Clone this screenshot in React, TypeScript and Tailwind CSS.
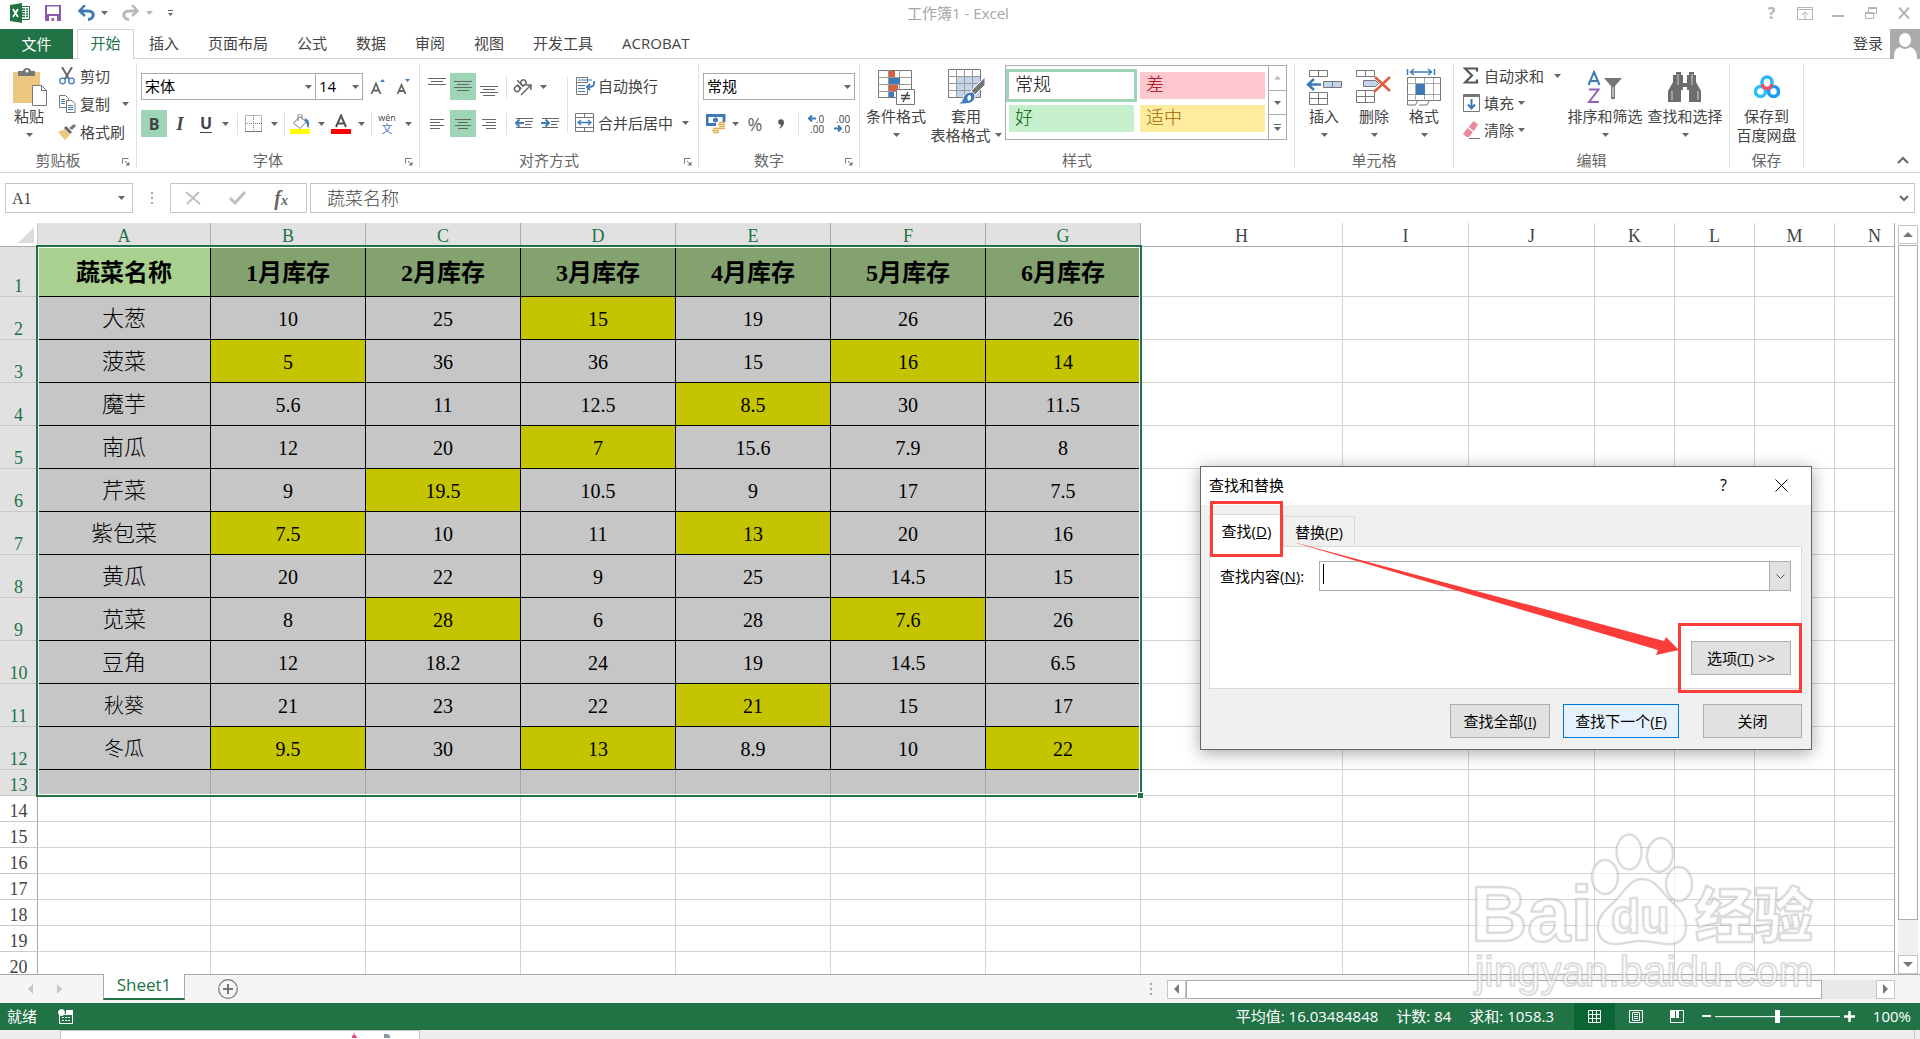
import type { ReactNode } from "react";

const COLUMNS = [
  { name: "A", width: 173 },
  { name: "B", width: 155 },
  { name: "C", width: 155 },
  { name: "D", width: 155 },
  { name: "E", width: 155 },
  { name: "F", width: 155 },
  { name: "G", width: 155 },
  { name: "H", width: 202 },
  { name: "I", width: 126 },
  { name: "J", width: 126 },
  { name: "K", width: 80 },
  { name: "L", width: 80 },
  { name: "M", width: 80 },
  { name: "N", width: 80 },
];
const ROW_HEADER_WIDTH = 38;
const TABLE_WIDTH = COLUMNS.reduce((sum, c) => sum + c.width, ROW_HEADER_WIDTH);

const HEADINGS = ["蔬菜名称", "1月库存", "2月库存", "3月库存", "4月库存", "5月库存", "6月库存"];

// a trailing * marks a highlighted cell
const STOCK = [
  ["大葱", "10", "25", "15*", "19", "26", "26"],
  ["菠菜", "5*", "36", "36", "15", "16*", "14*"],
  ["魔芋", "5.6", "11", "12.5", "8.5*", "30", "11.5"],
  ["南瓜", "12", "20", "7*", "15.6", "7.9", "8"],
  ["芹菜", "9", "19.5*", "10.5", "9", "17", "7.5"],
  ["紫包菜", "7.5*", "10", "11", "13*", "20", "16"],
  ["黄瓜", "20", "22", "9", "25", "14.5", "15"],
  ["苋菜", "8", "28*", "6", "28", "7.6*", "26"],
  ["豆角", "12", "18.2", "24", "19", "14.5", "6.5"],
  ["秋葵", "21", "23", "22", "21*", "15", "17"],
  ["冬瓜", "9.5*", "30", "13*", "8.9", "10", "22*"],
];
const EMPTY_ROWS = [14, 15, 16, 17, 18, 19, 20];

const SERIF = "font-['Liberation_Serif','Noto_Sans_CJK_SC',serif]";

function Caret({ light = false }: { light?: boolean }) {
  return (
    <svg width="7" height="4" viewBox="0 0 7 4" className={light ? "text-[#b8b8b8]" : "text-[#666]"}>
      <path d="M0 0h7L3.5 4z" fill="currentColor" />
    </svg>
  );
}

function Tool({ label, w, on = false, children }: { label: string; w: string; on?: boolean; children: ReactNode }) {
  return (
    <button
      aria-label={label}
      className={`flex h-[27px] shrink-0 items-center justify-center ${w} ${on ? "bg-[#9fd5b7]" : ""}`}
    >
      {children}
    </button>
  );
}

function MenuCaret({ label }: { label: string }) {
  return (
    <Tool label={label} w="w-3">
      <Caret />
    </Tool>
  );
}

function Divider({ gap }: { gap: string }) {
  return <div className={`h-[22px] w-px shrink-0 bg-[#e1e1e1] ${gap}`} />;
}

function Group({ title, w, launcher = false, children }: { title: string; w: string; launcher?: boolean; children: ReactNode }) {
  return (
    <section className={`relative flex h-[105px] shrink-0 flex-col border-r border-[#e1e1e1] ${w}`}>
      <div className="flex flex-1">{children}</div>
      <h2 className={`text-center leading-4 text-[#666] ${launcher ? "pr-5" : ""}`}>{title}</h2>
      {launcher && (
        <button aria-label={title + "设置"} className="absolute right-1.5 bottom-0.5">
          <svg width="8" height="8" viewBox="0 0 8 8" fill="none" stroke="#777">
            <path d="M.5 5.500V.5h6M3 3l4 4" />
            <path d="M7.500 3.500v4h-4z" fill="#777" stroke="none" />
          </svg>
        </button>
      )}
    </section>
  );
}

function BigButton({ icon, label, second, w }: { icon: ReactNode; label: string; second?: ReactNode; w: string }) {
  return (
    <button className={`flex flex-col items-center pt-1 ${w}`}>
      <span className="flex h-[39px] items-center justify-center">{icon}</span>
      <span className="h-5 leading-5 whitespace-nowrap">{label}</span>
      <span className="flex h-[18px] items-center gap-1 leading-[18px] whitespace-nowrap">{second ?? <Caret />}</span>
    </button>
  );
}

function SmallButton({ icon, label, h, caret }: { icon: ReactNode; label: string; h: string; caret?: string }) {
  return (
    <button className={`flex items-center gap-1 pb-0.5 whitespace-nowrap ${h}`}>
      <span className="flex w-[18px] justify-center">{icon}</span>
      {label}
      {caret && (
        <span className={caret}>
          <Caret />
        </span>
      )}
    </button>
  );
}

function Picker({ label, value, w }: { label: string; value: string; w: string }) {
  return (
    <div className={`relative h-[27px] shrink-0 ${w}`}>
      <select aria-label={label} className="h-full w-full appearance-none border border-[#ababab] bg-white pb-0.5 pl-[3px] text-[15px] text-black">
        <option>{value}</option>
      </select>
      <span className="pointer-events-none absolute inset-y-0 right-1 flex items-center">
        <Caret />
      </span>
    </div>
  );
}

// horizontal strokes of different length, used by all the alignment buttons
function Lines({ rows }: { rows: [number, number, number][] }) {
  return (
    <svg width="18" height="18" viewBox="0 0 18 18" stroke="#666">
      {rows.map(([x1, x2, y]) => (
        <path key={y} d={`M${x1} ${y + 0.5}H${x2}`} />
      ))}
    </svg>
  );
}

function TitleBar() {
  return (
    <header className="flex h-[29px] shrink-0 items-start pt-[3px] text-[#a6a6a6]">
      <div className="flex h-5 flex-1 items-center pl-[10px]">
        <svg width="20" height="20" viewBox="0 0 20 20">
          <path d="M10 3.500h9.500v13H10z" fill="#fff" stroke="#217346" />
          <path d="M12 6h3M16 6h2M12 8.500h3M16 8.500h2M12 11h3M16 11h2M12 13.500h3M16 13.500h2" stroke="#217346" strokeWidth="1.500" />
          <path d="M0 2l12-2v20L0 18z" fill="#217346" />
          <path d="M3 6l5 8M8 6l-5 8" stroke="#fff" strokeWidth="1.800" />
        </svg>
        <button aria-label="保存" className="ml-[15px]">
          <svg width="16" height="16" viewBox="0 0 16 16">
            <path d="M0 0h16v16H0z" fill="#8c5baf" />
            <path d="M2 1.500h12V9H2zM4 11h8v5H4z" fill="#fff" />
            <path d="M6.500 13H9v3H6.500z" fill="#8c5baf" />
          </svg>
        </button>
        <button aria-label="撤消" className="ml-4 flex items-center gap-1.5">
          <svg width="18" height="16" viewBox="0 0 18 16" fill="none" stroke="#3f7ab8" strokeWidth="3">
            <path d="M3 6h8c7 0 7 8 0 8.500" />
            <path d="M8 0L2.500 6 8 11" strokeWidth="2.500" />
          </svg>
          <Caret />
        </button>
        <button aria-label="恢复" className="ml-3.5 flex items-center gap-1.5">
          <svg width="18" height="16" viewBox="0 0 18 16" fill="none" stroke="#b8b8b8" strokeWidth="3">
            <path d="M15 6H7C0 6 0 14 7 14.500" />
            <path d="M10 0l5.500 6L10 11" strokeWidth="2.500" />
          </svg>
          <Caret light />
        </button>
        <button aria-label="自定义快速访问工具栏" className="ml-3.5">
          <svg width="7" height="7" viewBox="0 0 7 7" fill="#666">
            <path d="M1 0h5v1H1zM1 3h5L3.500 6z" />
          </svg>
        </button>
      </div>
      <h1 className="mr-[14px] leading-5">工作簿1 - Excel</h1>
      <div className="flex h-5 flex-1 justify-end text-[#b5b5b5]">
        <button aria-label="帮助" className="w-[33px] text-base leading-5 font-bold">?</button>
        <button aria-label="功能区显示选项" className="flex w-[33px] items-center justify-center">
          <svg width="16" height="13" viewBox="0 0 16 13" fill="none" stroke="currentColor">
            <path d="M.5.5h15v12H.5zM.5 2.500h15M8 12V5M5 8l3-3 3 3" />
          </svg>
        </button>
        <button aria-label="最小化" className="flex w-[33px] items-center justify-center">
          <svg width="12" height="12" viewBox="0 0 12 12">
            <path d="M0 8h12v2H0z" fill="currentColor" />
          </svg>
        </button>
        <button aria-label="还原" className="flex w-[33px] items-center justify-center">
          <svg width="12" height="12" viewBox="0 0 12 12" fill="none" stroke="currentColor">
            <path d="M.5 5.500h8v6h-8zM.5 6.500h8M3.500 5V.5h8v6H9M3.500 1.500h8" />
          </svg>
        </button>
        <button aria-label="关闭窗口" className="flex w-[33px] items-center justify-center">
          <svg width="12" height="12" viewBox="0 0 12 12" stroke="currentColor" strokeWidth="2">
            <path d="M1 .5l10 11M11 .5l-10 11" />
          </svg>
        </button>
      </div>
    </header>
  );
}

function RibbonTabs() {
  const tabs = ["插入", "页面布局", "公式", "数据", "审阅", "视图", "开发工具", "ACROBAT"];
  return (
    <nav className="flex h-[30px] shrink-0 leading-[26px]">
      <button className="w-[73px] bg-[#217346] leading-7 text-white">文件</button>
      <div className="w-1 border-b border-[#d4d4d4]" />
      <button className="w-[57px] border-x border-t border-[#d4d4d4] pb-[3px] text-[#217346]">开始</button>
      <div className="flex flex-1 gap-[29px] border-b border-[#d4d4d4] pb-0.5 pl-[15px]">
        {tabs.map((t) => (
          <button key={t}>{t}</button>
        ))}
        <button className="mr-[7px] ml-auto">登录</button>
      </div>
      <svg width="30" height="30" viewBox="0 0 30 30">
        <path d="M0 0h30v30H0z" fill="#ababab" />
        <ellipse cx="15" cy="11" rx="6" ry="7" fill="#fff" />
        <path d="M4 30c0-8 1-10 6-12 3 2.500 7 2.500 10 0 5 2 7 4 7 12z" fill="#fff" />
      </svg>
    </nav>
  );
}

function ClipboardGroup() {
  return (
    <Group title="剪贴板" w="w-[137px]" launcher>
      <BigButton
        w="mr-1 w-[58px]"
        label="粘贴"
        icon={
          <svg width="36" height="38" viewBox="-2 0 36 38">
            <path d="M0 4h27v31H0z" fill="#ecc77f" />
            <path d="M5 3h5c0-4 8-4 8 0h4v5H5z" fill="#777" />
            <circle cx="14" cy="3" r="1.500" fill="#fff" />
            <path d="M19.500 17.500h9l5 5v15h-14z" fill="#fff" stroke="#777" />
            <path d="M28.500 17.500v5h5" fill="none" stroke="#777" />
          </svg>
        }
      />
      <div className="-ml-1 flex flex-col">
        <SmallButton
          h="h-7"
          label="剪切"
          icon={
            <svg width="16" height="18" viewBox="0 0 16 18" fill="none">
              <path d="M3 0l7 12M13 0L6 12" stroke="#666" strokeWidth="2" />
              <circle cx="3.500" cy="14" r="2.800" stroke="#3f7ab8" strokeWidth="1.300" />
              <circle cx="12.500" cy="14" r="2.800" stroke="#3f7ab8" strokeWidth="1.300" />
            </svg>
          }
        />
        <SmallButton
          h="h-7"
          label="复制"
          caret="ml-2"
          icon={
            <svg width="17" height="18" viewBox="0 0 17 18" fill="#fff" stroke="#777">
              <path d="M.5.5h6l3 3v9h-9z" />
              <path d="M2 4.500h4M2 6.500h4M2 8.500h4" stroke="#3f7ab8" />
              <path d="M7.500 5.500h5.500l3 3v9H7.500z" />
              <path d="M9 10.500h5M9 12.500h5M9 14.500h5" stroke="#3f7ab8" />
            </svg>
          }
        />
        <SmallButton
          h="h-7"
          label="格式刷"
          icon={
            <svg width="18" height="16" viewBox="0 0 18 16">
              <path d="M0 8l7-3 5 6-5 5z" fill="#ecc77f" />
              <path d="M6 4l2-2 6 6-2 2z" fill="#666" />
              <path d="M11 4l5-4 2 2-4 4z" fill="#777" />
            </svg>
          }
        />
      </div>
    </Group>
  );
}

function FontGroup() {
  return (
    <Group title="字体" w="w-[283px]" launcher>
      <div className="flex flex-col gap-[10px] pt-[10px] pl-1">
        <div className="flex">
          <Picker label="字体" value="宋体" w="w-[175px]" />
          <Picker label="字号" value="14" w="-ml-px w-[48px]" />
          <Tool label="增大字号" w="ml-0.5 w-[26px]">
            <svg width="16" height="16" viewBox="0 0 16 16" fill="none">
              <path d="M1.500 15L6 4.500 10.500 15M3 11.500h6" stroke="#666" strokeWidth="1.800" />
              <path d="M10 3l2.500-3L15 3z" fill="#3f7ab8" />
            </svg>
          </Tool>
          <Tool label="减小字号" w="w-[24px]">
            <svg width="16" height="16" viewBox="0 0 16 16" fill="none">
              <path d="M2.500 15L6.500 6l4 9M4 12h5" stroke="#666" strokeWidth="1.800" />
              <path d="M10 0h5l-2.500 3z" fill="#3f7ab8" />
            </svg>
          </Tool>
        </div>
        <div className="flex items-center">
          <Tool label="加粗" w="w-[26px]" on>
            <b className="text-base">B</b>
          </Tool>
          <Tool label="倾斜" w="w-[26px]">
            <b className="font-['Liberation_Serif',serif] text-lg italic">I</b>
          </Tool>
          <Tool label="下划线" w="w-[26px]">
            <b className="border-b border-[#444] text-base leading-[18px]">U</b>
          </Tool>
          <MenuCaret label="下划线选项" />
          <Divider gap="ml-1.5" />
          <Tool label="边框" w="w-[30px]">
            <svg width="17" height="17" viewBox="0 0 17 17" fill="none" stroke="#777">
              <path d="M.5.5h16v16H.5zM8.500 0v16M0 8.500h17" strokeDasharray="1 1" />
              <path d="M0 16.500h17" />
            </svg>
          </Tool>
          <MenuCaret label="边框选项" />
          <Divider gap="ml-1" />
          <Tool label="填充颜色" w="w-[30px]">
            <svg width="20" height="20" viewBox="0 0 20 20" fill="none">
              <path d="M3.500 9L10 2.500 16 8l-6 6.500z" fill="#fff" stroke="#777" />
              <path d="M8 7V1.500c0-2 4-2 4 0V5" stroke="#777" />
              <path d="M14 4.500c5 0 6 4 4.500 9.500-2-1-1-5-4.500-9.500z" fill="#3f7ab8" />
              <path d="M0 15h20v5H0z" fill="#ff0" />
            </svg>
          </Tool>
          <MenuCaret label="填充颜色选项" />
          <Tool label="字体颜色" w="w-[28px]">
            <svg width="20" height="20" viewBox="0 0 20 20" fill="none">
              <path d="M5 13l5-11.500L15 13M7 9.500h6" stroke="#555" strokeWidth="2" />
              <path d="M0 15h20v5H0z" fill="red" />
            </svg>
          </Tool>
          <MenuCaret label="字体颜色选项" />
          <Divider gap="ml-1" />
          <Tool label="拼音" w="w-[30px]">
            <span className="flex flex-col items-center text-[9px] leading-[10px]">
              wén<span className="text-[11px] leading-3 text-[#3f7ab8]">文</span>
            </span>
          </Tool>
          <MenuCaret label="拼音选项" />
        </div>
      </div>
    </Group>
  );
}

function AlignGroup() {
  return (
    <Group title="对齐方式" w="w-[279px]" launcher>
      <div className="flex w-[145px] shrink-0 flex-col gap-[10px] pt-[10px] pl-1">
        <div className="flex items-center">
          <Tool label="顶端对齐" w="w-[26px]">
            <Lines rows={[[0, 18, 0], [3, 15, 3], [0, 18, 6]]} />
          </Tool>
          <Tool label="垂直居中" w="w-[26px]" on>
            <Lines rows={[[0, 18, 3], [3, 15, 6], [0, 18, 9], [3, 15, 12]]} />
          </Tool>
          <Tool label="底端对齐" w="w-[26px]">
            <Lines rows={[[0, 18, 8], [3, 15, 11], [0, 18, 14], [3, 15, 17]]} />
          </Tool>
          <Divider gap="ml-1" />
          <Tool label="方向" w="w-[30px]">
            <svg width="20" height="20" viewBox="0 0 20 20">
              <g fill="none" stroke="#666" strokeWidth="1.500" transform="rotate(-45 8 9)">
                <circle cx="4" cy="9" r="2.700" />
                <path d="M7 6v6M10 3v9" />
                <circle cx="12.800" cy="9" r="2.700" />
              </g>
              <path d="M9 18L18.500 8.500M14 8h5v5" fill="none" stroke="#666" strokeWidth="1.500" />
            </svg>
          </Tool>
          <MenuCaret label="方向选项" />
        </div>
        <div className="flex items-center">
          <Tool label="左对齐" w="w-[26px]">
            <Lines rows={[[2, 16, 4], [2, 12, 7], [2, 16, 10], [2, 12, 13]]} />
          </Tool>
          <Tool label="居中" w="w-[26px]" on>
            <Lines rows={[[1, 17, 4], [4, 14, 7], [1, 17, 10], [4, 14, 13]]} />
          </Tool>
          <Tool label="右对齐" w="w-[26px]">
            <Lines rows={[[2, 16, 4], [6, 16, 7], [2, 16, 10], [6, 16, 13]]} />
          </Tool>
          <Divider gap="ml-1" />
          <Tool label="减少缩进量" w="w-[34px]">
            <svg width="18" height="12" viewBox="0 0 18 12" stroke="#666">
              <path d="M1 .5h17M10 3.500h8M10 6.500h6M1 9.500h16" />
              <path d="M9 5H1M4.500 1.500L1 5l3.500 3.500" fill="none" stroke="#3f7ab8" strokeWidth="2" />
            </svg>
          </Tool>
          <Tool label="增加缩进量" w="w-[18px]">
            <svg width="18" height="12" viewBox="0 0 18 12" stroke="#666">
              <path d="M1 .5h17M10 3.500h8M10 6.500h6M1 9.500h16" />
              <path d="M0 5h8M4.500 1.500L8 5 4.500 8.500" fill="none" stroke="#3f7ab8" strokeWidth="2" />
            </svg>
          </Tool>
        </div>
      </div>
      <div className="mt-3.5 ml-0.5 h-[55px] w-px bg-[#e1e1e1]" />
      <div className="flex flex-col gap-[10px] pt-[10px] pl-[7px]">
        <button className="flex h-[27px] items-center gap-[3px] pb-0.5 whitespace-nowrap">
          <svg width="20" height="18" viewBox="0 0 20 18" fill="none" stroke="#777">
            <path d="M13 .5H1.500v17H12.500V12M1.500 5.500h11M12.500 .5v5" />
            <path d="M3 3h14M3 8.500h7M3 11.500h7M3 14.500h7" stroke="#3f7ab8" />
            <path d="M19 4v3c0 3-3 3-7 3M15 7l-3 3 3 3" stroke="#3f7ab8" strokeWidth="1.800" />
          </svg>
          自动换行
        </button>
        <button className="flex h-[27px] items-center gap-[3px] pb-0.5 whitespace-nowrap">
          <svg width="20" height="20" viewBox="0 0 20 20" fill="none" stroke="#777">
            <path d="M.5.5h18v18H.5zM.5 4.500h18M.5 14.500h18M9.500 .5v4M9.500 14.500v4" />
            <path d="M3 9.500h13M6 7L3 9.500 6 12M13 7l3 2.500-3 2.500" stroke="#3f7ab8" strokeWidth="1.300" />
          </svg>
          合并后居中
          <span className="ml-1.5">
            <Caret />
          </span>
        </button>
      </div>
    </Group>
  );
}

function NumberGroup() {
  return (
    <Group title="数字" w="w-[161px]" launcher>
      <div className="flex flex-col gap-[10px] pt-[10px] pl-1">
        <Picker label="数字格式" value="常规" w="w-[152px]" />
        <div className="flex items-center">
          <Tool label="会计数字格式" w="w-[26px]">
            <svg width="20" height="20" viewBox="0 0 20 20">
              <path d="M1 1.500h17v9H1z" fill="#fff" stroke="#3f7ab8" strokeWidth="3" />
              <circle cx="9.500" cy="6" r="2.500" fill="#3f7ab8" />
              <path d="M10 8h10v12H6v-6h4z" fill="#fff" />
              <path d="M13 8.500h6M12 10.500h7M13 12.500h6M12 14.500h7M7 14.500h5M6 16.500h7M7 18.500h6" stroke="#e3b15c" strokeWidth="1.400" />
            </svg>
          </Tool>
          <MenuCaret label="会计格式选项" />
          <Tool label="百分比样式" w="w-[28px]">
            <span className="text-lg text-[#666]">%</span>
          </Tool>
          <Tool label="千位分隔样式" w="w-[24px]">
            <svg width="6" height="10" viewBox="0 0 6 10" fill="#555">
              <circle cx="3" cy="3" r="2.800" />
              <path d="M5.800 3c0 4-2 6-5 6.500C2.500 8 3 7 3 5z" />
            </svg>
          </Tool>
          <Divider gap="ml-[5px]" />
          <Tool label="增加小数位数" w="w-[34px]">
            <span className="grid justify-items-end text-[10px] leading-[10px]">
              <span className="flex items-center">
                <svg width="8" height="7" viewBox="0 0 8 7" fill="none" stroke="#3f7ab8" strokeWidth="2">
                  <path d="M8 3.500H1M4 .5l-3 3 3 3" />
                </svg>
                .0
              </span>
              <span>.00</span>
            </span>
          </Tool>
          <Tool label="减少小数位数" w="w-[18px]">
            <span className="grid justify-items-end text-[10px] leading-[10px]">
              <span>.00</span>
              <span className="flex items-center">
                <svg width="8" height="7" viewBox="0 0 8 7" fill="none" stroke="#3f7ab8" strokeWidth="2">
                  <path d="M0 3.500h7M4 .5l3 3-3 3" />
                </svg>
                .0
              </span>
            </span>
          </Tool>
        </div>
      </div>
    </Group>
  );
}

function StylesGroup() {
  return (
    <Group title="样式" w="w-[435px]">
      <BigButton
        w="ml-0.5 w-[68px]"
        label="条件格式"
        icon={
          <svg width="38" height="36" viewBox="0 0 38 36" fill="none" stroke="#999">
            <path d="M1.500 1.500h33v27h-33z" fill="#fff" stroke="#777" />
            <path d="M1 8.500h33M1 15.500h33M1 22.500h33M11.500 1v27M22.500 1v27" />
            <path d="M12 2h6v6h-6zM12 16h9v6h-9z" fill="#dc5f3f" stroke="none" />
            <path d="M12 9h11v6H12zM12 23h5v5h-5z" fill="#3f7ab8" stroke="none" />
            <path d="M19.500 20.500h18v15h-18z" fill="#fff" stroke="#777" />
            <path d="M24 26.500h9M24 29.500h9M31 23l-5 10" stroke="#444" strokeWidth="1.300" />
          </svg>
        }
      />
      <BigButton
        w="w-[72px]"
        label="套用"
        second={
          <>
            表格格式
            <Caret />
          </>
        }
        icon={
          <svg width="38" height="36" viewBox="0 0 38 36" fill="none" stroke="#999">
            <path d="M1.500.5h32v28h-32z" fill="#fff" stroke="#777" />
            <path d="M9 8h24v20H9z" fill="#c3d5ea" stroke="none" />
            <path d="M1 7.500h32M1 14.500h32M1 21.500h32M9.500 0v28M17.500 0v28M25.500 0v28" />
            <path d="M38 8v8L28 26l-4-4z" fill="#777" stroke="#fff" />
            <path d="M24 23c4 0 5 4 3 8-2 4-9 4-16 4 5-2 4-5 6-8 2-3 4-4 7-4z" fill="#3f7ab8" stroke="#fff" />
            <path d="M22 26c3 0 3 5-1 6-1-3-1-5 1-6z" fill="#fff" stroke="none" />
          </svg>
        }
      />
      <div className="mt-0.5 ml-[3px] flex h-[75px] w-[282px] border border-[#ababab]">
        <div className={`grid flex-1 grid-cols-2 content-start gap-1.5 px-[3px] pt-1.5 text-[18px] leading-[27px] font-light ${SERIF}`}>
          <button className="bg-white pl-1.5 text-left text-black outline-3 outline-[#9fd5b7]">常规</button>
          <button className="bg-[#ffc7ce] pl-1.5 text-left text-[#9c0006]">差</button>
          <button className="bg-[#c6efce] pl-1.5 text-left text-[#006100]">好</button>
          <button className="bg-[#ffeb9c] pl-1.5 text-left text-[#9c6500]">适中</button>
        </div>
        <div className="flex w-[18px] flex-col border-l border-[#ababab]">
          <button aria-label="上一行" className="flex flex-1 rotate-180 items-center justify-center">
            <Caret light />
          </button>
          <button aria-label="下一行" className="flex flex-1 items-center justify-center border-y border-[#ababab]">
            <Caret />
          </button>
          <button aria-label="其他样式" className="flex flex-1 items-center justify-center">
            <svg width="7" height="7" viewBox="0 0 7 7" fill="#666">
              <path d="M0 0h7v1H0zM0 3h7L3.500 7z" />
            </svg>
          </button>
        </div>
      </div>
    </Group>
  );
}

function CellsGroup() {
  return (
    <Group title="单元格" w="w-[159px]">
      <BigButton
        w="ml-1 w-[50px]"
        label="插入"
        icon={
          <svg width="36" height="36" viewBox="0 0 36 36" fill="none" stroke="#777">
            <path d="M3.500 1.500h18v6h-18zM12.500 1.500v6M3.500 23.500h18v12h-18zM12.500 23.500v12M3.500 29.500h18" />
            <path d="M17.500 12.500h18v6h-18zM26.500 12.500v6" fill="#c3d5ea" />
            <path d="M15 15.500H2M8 10l-6 5.500L8 21" stroke="#3f7ab8" strokeWidth="2.500" />
          </svg>
        }
      />
      <BigButton
        w="w-[50px]"
        label="删除"
        icon={
          <svg width="36" height="36" viewBox="0 0 36 36" fill="none" stroke="#777">
            <path d="M.5 1.500h18v6H.5zM9.500 1.500v6M.5 21.500h18v12H.5zM9.500 21.500v12M.5 27.500h18" />
            <path d="M7.500 11.500h12l3 3-3 3h-12z" fill="#c3d5ea" />
            <path d="M19 8l15 14M34 8L18 23" stroke="#dc5f3f" strokeWidth="2.500" />
          </svg>
        }
      />
      <BigButton
        w="w-[50px]"
        label="格式"
        icon={
          <svg width="36" height="38" viewBox="0 0 36 38" fill="none" stroke="#aaa">
            <path d="M1.500 9.500h33v23h-33z" fill="#fff" stroke="#777" />
            <path d="M1 15.500h33M1 26.500h33M9.500 10v23M18.500 10v23M27.500 10v23" />
            <path d="M10 16h9v11h-9z" fill="#3f7ab8" stroke="none" />
            <path d="M1.500 33v4h8l2-4M13 37h8l2-4" stroke="#777" />
            <path d="M1.500 1v6M28.500 1v6M5 4h21M8 1L4.500 4 8 7M22 1l3.500 3L22 7" stroke="#3f7ab8" strokeWidth="1.500" />
          </svg>
        }
      />
    </Group>
  );
}

function EditGroup() {
  return (
    <Group title="编辑" w="w-[276px]">
      <div className="ml-2 flex w-[103px] flex-col items-start">
        <SmallButton
          h="h-[27px]"
          label="自动求和"
          caret="ml-1.5"
          icon={
            <svg width="16" height="17" viewBox="0 0 16 17" fill="none" stroke="#555" strokeWidth="2.200">
              <path d="M14 4.500V1.500H2l7 7-7 7h12v-3" />
            </svg>
          }
        />
        <SmallButton
          h="h-[27px]"
          label="填充"
          caret="ml-0"
          icon={
            <svg width="17" height="18" viewBox="0 0 17 18" fill="none" stroke="#777">
              <path d="M.5.5h16v17H.5z" />
              <path d="M0 1h17v2H0z" fill="#777" stroke="none" />
              <path d="M8.500 5v9M5 10.500l3.500 4 3.500-4" stroke="#3f7ab8" strokeWidth="2" />
            </svg>
          }
        />
        <SmallButton
          h="h-[27px]"
          label="清除"
          caret="ml-0"
          icon={
            <svg width="18" height="18" viewBox="0 0 18 18">
              <path d="M11.500 0L16 3.500 12 10 6.500 6z" fill="#e88a9a" />
              <path d="M5.500 7l5.500 4-4 5H4.500L1 13z" fill="#e88a9a" />
              <path d="M7 17.500h11" stroke="#777" />
            </svg>
          }
        />
      </div>
      <BigButton
        w="w-[80px]"
        label="排序和筛选"
        icon={
          <svg width="36" height="34" viewBox="0 0 36 34" fill="none">
            <path d="M1.500 15L7 2l5.500 13M3.500 11h7" stroke="#3f7ab8" strokeWidth="2" />
            <path d="M2 19.500h9.500L2 32h10" stroke="#9561b5" strokeWidth="2" />
            <path d="M17 8h18l-7 8v13h-4V16z" fill="#777" />
            <path d="M26 17v10" stroke="#fff" />
          </svg>
        }
      />
      <BigButton
        w="w-[80px]"
        label="查找和选择"
        icon={
          <svg width="34" height="32" viewBox="0 0 34 32" fill="#6d6d6d">
            <path d="M8 1h5v3h2v8h4V4h2V1h5v3h2v7l5 9v11H21V19h-2v-3h-4v3h-2v12H0V20l5-9V4h3z" />
            <path d="M10 3v11M24 3v11M4 20v9M30 20v9" stroke="#fff" strokeWidth=".7" />
          </svg>
        }
      />
    </Group>
  );
}

function SaveGroup() {
  return (
    <Group title="保存" w="w-[74px]">
      <BigButton
        w="w-[74px]"
        label="保存到"
        second="百度网盘"
        icon={
          <svg width="26" height="24" viewBox="0 0 26 24" fill="none" strokeWidth="3.500">
            <circle cx="6.500" cy="16.500" r="5" stroke="#2fc0f0" />
            <circle cx="19.500" cy="16.500" r="5" stroke="#1a9cf5" />
            <path d="M8 9V7a5 5 0 0110 0v2" stroke="#2fb4f5" />
            <path d="M8.500 9a4.500 4.500 0 009 0" stroke="#f2506e" />
          </svg>
        }
      />
    </Group>
  );
}

function FormulaBar() {
  return (
    <div className={`flex h-[50px] shrink-0 py-[10px] pr-[5px] pl-[5px] ${SERIF}`}>
      <div className="relative w-[128px]">
        <input aria-label="名称框" defaultValue="A1" className="h-full w-full border border-[#c6c6c6] pt-0.5 pl-1.5 text-base text-[#444]" />
        <span className="absolute inset-y-0 right-2 flex items-center">
          <Caret />
        </span>
      </div>
      <div className="flex w-[37px] flex-col items-center justify-center gap-[3px]">
        <i className="h-0.5 w-0.5 bg-[#a6a6a6]" />
        <i className="h-0.5 w-0.5 bg-[#a6a6a6]" />
        <i className="h-0.5 w-0.5 bg-[#a6a6a6]" />
      </div>
      <div className="flex w-[137px] items-center justify-around border border-[#c6c6c6] pr-1">
        <button aria-label="取消">
          <svg width="16" height="14" viewBox="0 0 16 14" stroke="#c0c0c0" strokeWidth="2">
            <path d="M1 1l14 12M14 1L2 13" />
          </svg>
        </button>
        <button aria-label="输入">
          <svg width="17" height="14" viewBox="0 0 17 14" fill="none" stroke="#c0c0c0" strokeWidth="3">
            <path d="M1 7l5 5L16 1" />
          </svg>
        </button>
        <button aria-label="插入函数" className="text-xl leading-6 font-bold text-[#666] italic">
          f<span className="text-sm">x</span>
        </button>
      </div>
      <div className="relative ml-[3px] flex-1">
        <input aria-label="编辑栏" defaultValue="蔬菜名称" className="h-full w-full border border-[#c6c6c6] pb-0.5 pl-4 text-[18px] font-light text-[#444]" />
        <button aria-label="展开编辑栏" className="absolute inset-y-0 right-1.5 flex items-center">
          <svg width="10" height="7" viewBox="0 0 10 7" fill="none" stroke="#666" strokeWidth="2">
            <path d="M1 1l4 4 4-4" />
          </svg>
        </button>
      </div>
    </div>
  );
}

function RowHead({ n, selected = false }: { n: number; selected?: boolean }) {
  return (
    <th
      scope="row"
      className={`border-r border-b border-r-[#ababab] border-b-[#c9c9c9] p-0 text-center align-bottom text-lg leading-5 font-normal ${selected ? "bg-[#e1e1e1] text-[#217346]" : "text-[#444]"}`}
    >
      {n}
    </th>
  );
}

function BlankCells({ from }: { from: number }) {
  return COLUMNS.slice(from).map((c) => <td key={c.name} className="border-r border-b border-[#d4d4d4] p-0" />);
}

function Sheet() {
  return (
    <div className="relative min-w-0 flex-1 overflow-hidden border-r border-[#ababab]">
      <table className={`table-fixed border-separate border-spacing-0 text-center text-black ${SERIF}`} style={{ width: TABLE_WIDTH }}>
        <colgroup>
          <col style={{ width: ROW_HEADER_WIDTH }} />
          {COLUMNS.map((c) => (
            <col key={c.name} style={{ width: c.width }} />
          ))}
        </colgroup>
        <thead>
          <tr className="h-6">
            <td className="border-r border-b border-r-[#c9c9c9] border-b-[#ababab] p-0 pr-[3px] align-bottom">
              <svg width="16" height="16" viewBox="0 0 16 16" className="mb-[3px] ml-auto block">
                <path d="M16 0v16H0z" fill="#dcdcdc" />
              </svg>
            </td>
            {COLUMNS.map((c, i) => (
              <th
                key={c.name}
                scope="col"
                className={`border-r border-b border-b-[#ababab] p-0 pt-0.5 text-lg leading-5 font-normal ${i < 7 ? "border-r-[#ababab] bg-[#e1e1e1] text-[#217346]" : "border-r-[#d4d4d4] text-[#444]"}`}
              >
                {c.name}
              </th>
            ))}
          </tr>
        </thead>
        <tbody>
          <tr className="h-[50px]">
            <RowHead n={1} selected />
            {HEADINGS.map((h, i) => (
              <td key={h} className={`border-r border-b border-black p-0 pt-0.5 text-2xl leading-8 font-bold ${i === 0 ? "bg-[#a9d08e]" : "bg-[#84a170]"}`}>
                {h}
              </td>
            ))}
            <BlankCells from={7} />
          </tr>
          {STOCK.map((row, r) => (
            <tr key={row[0]} className="h-[43px]">
              <RowHead n={r + 2} selected />
              {row.map((v, i) => (
                <td
                  key={i}
                  className={`border-r border-b border-black p-0 pt-0.5 leading-8 font-light ${i === 0 && r < 9 ? "text-[22px]" : "text-xl"} ${v.endsWith("*") ? "bg-[#c4c400]" : "bg-[#c6c6c6]"}`}
                >
                  {v.replace("*", "")}
                </td>
              ))}
              <BlankCells from={7} />
            </tr>
          ))}
          <tr className="h-[26px]">
            <RowHead n={13} selected />
            {HEADINGS.map((h) => (
              <td key={h} className="border-r border-[#a6a6a6] bg-[#c6c6c6] p-0" />
            ))}
            <BlankCells from={7} />
          </tr>
          {EMPTY_ROWS.map((n) => (
            <tr key={n} className="h-[26px]">
              <RowHead n={n} />
              <BlankCells from={0} />
            </tr>
          ))}
        </tbody>
      </table>
      {/* selection frame A1:G13 */}
      <div className="pointer-events-none absolute top-[22px] left-9 h-[552px] w-[1106px] border-2 border-[#217346]">
        <div className="h-full border border-white" />
        <div className="absolute -right-1 -bottom-1 h-[7px] w-[7px] border border-white bg-[#217346]" />
      </div>
    </div>
  );
}

function VerticalScroll() {
  return (
    <div className="flex w-[25px] shrink-0 flex-col pt-0.5 pr-[2px] pl-[3px]">
      <button aria-label="向上滚动" className="flex h-[19px] items-center justify-center border border-[#c6c6c6] bg-white">
        <svg width="10" height="5" viewBox="0 0 10 5" fill="#777">
          <path d="M0 5h10L5 0z" />
        </svg>
      </button>
      <div className="mt-px flex-1 bg-[#f0f0f0]">
        <div className="h-[95%] border border-[#ababab] bg-white" />
      </div>
      <button aria-label="向下滚动" className="flex h-[19px] items-center justify-center border border-[#c6c6c6] bg-white">
        <svg width="10" height="5" viewBox="0 0 10 5" fill="#777">
          <path d="M0 0h10L5 5z" />
        </svg>
      </button>
    </div>
  );
}

function SheetTabs() {
  return (
    <div className="flex h-[29px] shrink-0 bg-[#f5f5f5]">
      <div className="flex w-[103px] items-center gap-6 border-t border-[#ababab] pl-7">
        <svg width="5" height="10" viewBox="0 0 5 10" fill="#c6c6c6">
          <path d="M5 0v10L0 5z" />
        </svg>
        <svg width="5" height="10" viewBox="0 0 5 10" fill="#c6c6c6">
          <path d="M0 0v10l5-5z" />
        </svg>
      </div>
      <button className="h-[26px] w-[82px] border-x border-b-2 border-x-[#ababab] border-b-[#217346] bg-white pb-0.5 text-[17px] leading-[22px] text-[#217346]">
        Sheet1
      </button>
      <div className="flex flex-1 items-center border-t border-[#ababab] pl-[33px]">
        <button aria-label="新工作表">
          <svg width="20" height="20" viewBox="0 0 20 20" fill="none" stroke="#777">
            <circle cx="10" cy="10" r="9.300" strokeWidth="1.200" />
            <path d="M10 5v10M5 10h10" strokeWidth="2" />
          </svg>
        </button>
        <div className="ml-auto flex w-[17px] flex-col gap-[3px]">
          <i className="h-0.5 w-0.5 bg-[#a6a6a6]" />
          <i className="h-0.5 w-0.5 bg-[#a6a6a6]" />
          <i className="h-0.5 w-0.5 bg-[#a6a6a6]" />
        </div>
        <div className="mr-[25px] flex h-[19px] w-[728px] bg-[#e9e9e9]">
          <button aria-label="向左滚动" className="flex w-[19px] items-center justify-center border border-[#c6c6c6] bg-white">
            <svg width="5" height="10" viewBox="0 0 5 10" fill="#777">
              <path d="M5 0v10L0 5z" />
            </svg>
          </button>
          <div className="w-[636px] border border-[#ababab] bg-white" />
          <button aria-label="向右滚动" className="ml-auto flex w-[19px] items-center justify-center border border-[#c6c6c6] bg-white">
            <svg width="5" height="10" viewBox="0 0 5 10" fill="#777">
              <path d="M0 0v10l5-5z" />
            </svg>
          </button>
        </div>
      </div>
    </div>
  );
}

function StatusBar() {
  return (
    <footer className="flex h-[27px] shrink-0 items-center bg-[#217346] pr-[9px] pl-[7px] leading-5 text-white">
      <span className="pb-0.5">就绪</span>
      <button aria-label="录制宏" className="ml-[21px]">
        <svg width="15" height="15" viewBox="0 0 15 15" fill="none" stroke="#fff">
          <path d="M1.500 4v10.500h13V1.500H8M1 5.500h13" />
          <path d="M8 1h7v4H8z" fill="#fff" stroke="none" />
          <path d="M4 8.500h8M4 11.500h8" strokeDasharray="2 1" />
          <circle cx="3.500" cy="3.500" r="3" fill="#fff" />
        </svg>
      </button>
      <div className="ml-auto flex gap-[18px] pb-0.5">
        <span>平均值: 16.03484848</span>
        <span>计数: 84</span>
        <span>求和: 1058.3</span>
      </div>
      <div className="ml-5 flex h-full">
        <button aria-label="普通" className="flex w-[41px] items-center justify-center bg-[#0b6434]">
          <svg width="13" height="13" viewBox="0 0 13 13" fill="none" stroke="#fff">
            <path d="M.5.500h12v12H.5zM4.500 0v13M8.500 0v13M0 4.500h13M0 8.500h13" />
          </svg>
        </button>
        <button aria-label="页面布局视图" className="flex w-[41px] items-center justify-center">
          <svg width="14" height="13" viewBox="0 0 14 13" fill="none" stroke="#fff">
            <path d="M.5.500h13v12H.5zM3.500 2.500h7v8h-7zM5 4.500h4M5 6.500h4M5 8.500h4" />
          </svg>
        </button>
        <button aria-label="分页预览" className="flex w-[41px] items-center justify-center">
          <svg width="14" height="13" viewBox="0 0 14 13" fill="none" stroke="#fff">
            <path d="M.5.500h13v12H.5z" />
            <path d="M1 1h4v7H1zM6 1h3v7H6z" fill="#fff" stroke="none" />
          </svg>
        </button>
      </div>
      <button aria-label="缩小" className="ml-[5px] flex">
        <svg width="9" height="11" viewBox="0 0 9 11">
          <path d="M0 4h9v2H0z" fill="#fff" />
        </svg>
      </button>
      <input
        type="range"
        aria-label="缩放"
        defaultValue="50"
        className="mx-1 h-[14px] w-[125px] appearance-none bg-linear-to-b from-transparent from-45% via-white via-45% to-transparent to-55% [&::-webkit-slider-thumb]:h-[13px] [&::-webkit-slider-thumb]:w-[5px] [&::-webkit-slider-thumb]:appearance-none [&::-webkit-slider-thumb]:bg-white"
      />
      <button aria-label="放大" className="flex">
        <svg width="11" height="11" viewBox="0 0 11 11" stroke="#fff" strokeWidth="2.500">
          <path d="M5.500 0v11M0 5.500h11" />
        </svg>
      </button>
      <span className="w-[56px] pb-0.5 text-right">100%</span>
    </footer>
  );
}

function TaskBar() {
  return (
    <div className="flex h-[9px] shrink-0 overflow-hidden bg-[#ededed]">
      <div className="ml-[60px] w-[360px] border border-b-0 border-[#c6c6c6] bg-white">
        <svg width="40" height="7" viewBox="0 0 40 7" className="ml-[290px]">
          <path d="M3 1v3M1 7l1-3h2l2 3z" fill="#e0406a" stroke="#e0406a" strokeWidth=".5" />
          <path d="M33 3h4l2 2v2h-6z" fill="#8a9aa3" />
        </svg>
      </div>
      <div className="mr-[5px] ml-auto border-r border-[#c6c6c6]" />
    </div>
  );
}

function FindDialog() {
  const plain = "h-[34px] border border-[#adadad] bg-[#e1e1e1]";
  return (
    <div
      role="dialog"
      aria-label="查找和替换"
      className="absolute top-[466px] left-[1200px] flex h-[284px] w-[612px] flex-col border border-[#666] bg-[#f0f0f0] text-black shadow-[0_3px_16px_rgba(0,0,0,0.35)]"
    >
      <div className="flex h-[38px] shrink-0 items-center bg-white pb-0.5 pl-2">
        查找和替换
        <button aria-label="帮助" className="mr-[48px] ml-auto text-base">?</button>
        <button aria-label="关闭对话框" className="mr-[23px]">
          <svg width="13" height="13" viewBox="0 0 13 13" stroke="#000">
            <path d="M.5.500l12 12M12.500.500l-12 12" />
          </svg>
        </button>
      </div>
      <div className="pt-[9px] pr-[9px] pl-2">
        <div className="flex h-8 items-end">
          <button className="relative -mb-px h-[33px] w-[75px] border border-b-0 border-[#d9d9d9] bg-white">
            查找(<u>D</u>)
          </button>
          <button className="h-[30px] w-[71px] border border-b-0 border-l-0 border-[#d9d9d9]">
            替换(<u>P</u>)
          </button>
        </div>
        <div className="h-[143px] border border-[#d9d9d9] bg-white pt-3.5 pr-[10px] pl-[10px]">
          <div className="flex items-center">
            <label htmlFor="find-what" className="w-[99px]">
              查找内容(<u>N</u>):
            </label>
            <div className="flex h-[30px] flex-1 border border-[#adadad]">
              <span className="mt-0.5 ml-[3px] h-5 w-px bg-black" />
              <input id="find-what" className="min-w-0 flex-1 outline-none" />
              <button aria-label="历史记录" className="flex w-[21px] items-center justify-center border-l border-[#adadad] bg-[#e1e1e1]">
                <svg width="9" height="5" viewBox="0 0 9 5" fill="none" stroke="#555">
                  <path d="M.5.500l4 4 4-4" />
                </svg>
              </button>
            </div>
          </div>
          <button className={`mt-[50px] ml-auto block w-[100px] ${plain}`}>
            选项(<u>T</u>) &gt;&gt;
          </button>
        </div>
        <div className="mt-[15px] flex justify-end">
          <button className={`w-[100px] ${plain}`}>
            查找全部(<u>I</u>)
          </button>
          <button className="ml-[13px] h-[34px] w-[116px] border border-[#0078d7] bg-[#e5f1fb]">
            查找下一个(<u>F</u>)
          </button>
          <button className={`ml-6 w-[99px] ${plain}`}>关闭</button>
        </div>
      </div>
      {/* red call-outs over the dialog */}
      <div className="pointer-events-none absolute top-[34px] left-[9px] h-[56px] w-[73px] border-3 border-[#fb3c38]" />
      <div className="pointer-events-none absolute top-[156px] left-[477px] h-[70px] w-[124px] border-3 border-[#fb3c38]" />
      <svg width="384" height="114" viewBox="0 0 384 114" className="pointer-events-none absolute top-[76px] left-[95px]">
        <path d="M0 0l1 0 367 98 2-4 13 13-23 5 2-5z" fill="#fb3c38" />
      </svg>
    </div>
  );
}

function Watermark() {
  return (
    <svg
      width="360"
      height="176"
      viewBox="0 0 360 176"
      className="pointer-events-none absolute top-[828px] left-[1466px]"
      fill="#fff"
      fillOpacity=".7"
      stroke="#8c8c8c"
      strokeOpacity=".3"
      strokeWidth="2.500"
      strokeLinejoin="round"
      fontFamily="Liberation Sans, Noto Sans CJK SC, sans-serif"
    >
      <ellipse cx="139" cy="49" rx="13" ry="17" />
      <ellipse cx="163" cy="24" rx="12.500" ry="17.500" />
      <ellipse cx="194" cy="27" rx="13" ry="17" transform="rotate(8 194 27)" />
      <ellipse cx="213" cy="56" rx="13" ry="17" />
      <path d="M176 51c14 0 20 14 28 21 8 8 16 14 16 27 0 14-10 18-20 17-9-1-16-3-25-3s-18 3-28 3c-10-1-16-8-15-19 1-11 10-17 18-25 8-8 14-21 26-21z" />
      <text x="5" y="113" fontSize="78" fontWeight="bold">Bai</text>
      <text x="145" y="105" fontSize="48" fontWeight="bold">du</text>
      <text x="229" y="109" fontSize="59" fontWeight="900">经验</text>
      <text x="9" y="158" fontSize="42" strokeWidth="2">jingyan.baidu.com</text>
    </svg>
  );
}

export default function App() {
  return (
    <div className="relative flex h-screen flex-col overflow-hidden bg-white font-['Open_Sans','Noto_Sans_CJK_SC',sans-serif] text-[15px] leading-5 text-[#444]">
      <TitleBar />
      <RibbonTabs />
      <div className="flex h-[114px] shrink-0 border-b border-[#d4d4d4] pt-1">
        <ClipboardGroup />
        <FontGroup />
        <AlignGroup />
        <NumberGroup />
        <StylesGroup />
        <CellsGroup />
        <EditGroup />
        <SaveGroup />
        <button aria-label="折叠功能区" className="mt-auto mr-[11px] mb-2 ml-auto">
          <svg width="12" height="8" viewBox="0 0 12 8" fill="none" stroke="#666" strokeWidth="2">
            <path d="M1 7l5-5 5 5" />
          </svg>
        </button>
      </div>
      <FormulaBar />
      <main className="flex min-h-0 flex-1">
        <Sheet />
        <VerticalScroll />
      </main>
      <SheetTabs />
      <StatusBar />
      <TaskBar />
      <FindDialog />
      <Watermark />
    </div>
  );
}
